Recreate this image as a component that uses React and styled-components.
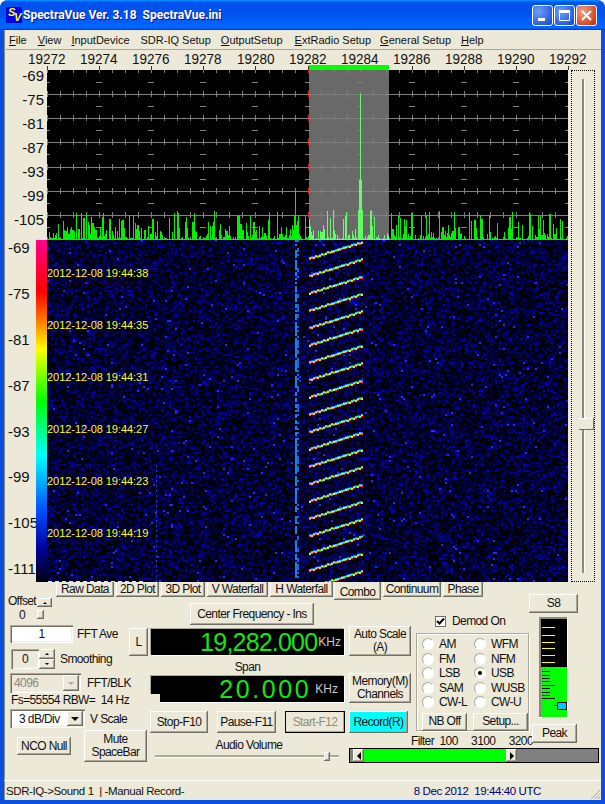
import React from 'react';
import styled, { createGlobalStyle } from 'styled-components';

const GlobalStyle = createGlobalStyle`
html, body { margin: 0; padding: 0; background: #fff; }
body { font-family: "Liberation Sans", Arial, sans-serif; font-size: 12px; letter-spacing: -0.6px; color: #111; }
`;

const raised = `
  background: #ece9d8;
  box-shadow: inset -1px -1px 0 #716f64, inset 1px 1px 0 #fff, inset -2px -2px 0 #aca899;
`;
const sunken = `
  box-shadow: inset 1px 1px 0 #aca899, inset 2px 2px 0 #716f64, inset -1px -1px 0 #fff, inset -2px -2px 0 #f1efe2;
`;

const Window = styled.div`
  width: 605px;
  height: 804px;
  display: flex;
  flex-direction: column;
  overflow: hidden;
  border-radius: 8px 8px 0 0;
  background: #0a50e0;
`;
const TitleBar = styled.div`
  height: 30px;
  flex: none;
  display: flex;
  align-items: center;
  padding: 0 8px 0 6px;
  background: linear-gradient(180deg, #0997ff 0%, #0053ee 8%, #0050ee 40%, #0066ff 88%, #0066ff 93%, #005bff 95%, #003dd7 96%, #003dd7 100%);
`;
const Logo = styled.div`
  width: 16px;
  height: 16px;
  background: #0000e0;
  position: relative;
  flex: none;
  font: italic bold 11px "Liberation Sans", sans-serif;
  letter-spacing: 0;
  color: #ffff00;
`;
const LogoLetter = styled.span`
  position: absolute;
  left: ${p => p.$x}px;
  top: ${p => p.$y}px;
`;
const TitleText = styled.div`
  margin-left: 1px;
  color: #fff;
  font: bold 12px Roboto, "Liberation Sans", sans-serif;
  letter-spacing: 0;
  white-space: pre;
  text-shadow: 1px 1px 0 #0f1089;
  flex: 1;
`;
const CapButton = styled.div`
  width: 21px;
  height: 21px;
  margin-left: 1px;
  border: 1px solid #fff;
  border-radius: 3px;
  box-sizing: border-box;
  background: ${p => p.$close
    ? 'radial-gradient(circle at 30% 30%, #f0a088, #d84a20 70%, #b02c08)'
    : 'radial-gradient(circle at 30% 30%, #6fa0f8, #2a5fe0 70%, #1a44c0)'};
  display: flex;
  align-items: center;
  justify-content: center;
`;
const Client = styled.div`
  flex: 1;
  margin: 0 4px 4px;
  background: #ece9d8;
  display: flex;
  flex-direction: column;
  min-height: 0;
  box-shadow: inset 1px 0 0 #8c8a7c;
`;
const MenuBar = styled.div`
  height: 20px;
  flex: none;
  display: flex;
  align-items: center;
  padding-left: 5px;
  font-size: 11px;
  letter-spacing: 0;
  border-bottom: 1px solid #aca899;
  box-sizing: border-box;
`;
const MenuItem = styled.span`
  margin-right: ${p => p.$gap}px;
  white-space: pre;
`;
const AxisRow = styled.div`
  height: 20px;
  flex: none;
  display: flex;
  padding-left: 17px;
  position: relative;
`;
const AxisLabel = styled.div`
  width: 52.1px;
  flex: none;
  text-align: center;
  font: 15px "Liberation Sans", sans-serif;
  letter-spacing: 0;
  line-height: 17px;
  position: relative;
  &::after {
    content: "";
    position: absolute;
    left: 50%;
    bottom: 0;
    height: 4px;
    width: 1px;
    background: #333;
  }
`;
const AxisNumber = styled.span`
  display: inline-block;
  transform: scaleX(0.9);
`;
const SpanMark = styled.div`
  position: absolute;
  left: 305px;
  bottom: 0;
  width: 80px;
  height: 5px;
  background: #00ff00;
`;
const PlotRow = styled.div`
  display: flex;
  flex: none;
`;
const PlotStack = styled.div`
  width: 564px;
  display: flex;
  flex-direction: column;
`;
const SpectrumRow = styled.div`
  display: flex;
  height: 170px;
`;
const WaterfallRow = styled.div`
  display: flex;
  height: 342px;
`;
const Scale = styled.div`
  width: ${p => p.$w}px;
  flex: none;
  display: flex;
  flex-direction: column;
  align-items: ${p => p.$left ? 'flex-start' : 'flex-end'};
  padding: ${p => p.$left ? '0 0 0 4px' : '0 3px 0 0'};
  box-sizing: border-box;
  font: 15px "Liberation Sans", sans-serif;
  letter-spacing: 0;
  line-height: ${p => p.$lh}px;
  gap: ${p => p.$gap}px;
`;
const ColorBar = styled.div`
  width: 11px;
  flex: none;
  background: linear-gradient(180deg, #ff0090 0%, #ff0040 8%, #ff0000 15%, #ff8000 24%, #ffff00 32%, #00ff00 47%, #00ffff 63%, #0050ff 79%, #0000a0 90%, #000010 100%);
`;
const Plot = styled.div`
  width: 521px;
  flex: none;
  position: relative;
  background: #000;
  overflow: hidden;
  & > svg { display: block; }
`;
const StampLayer = styled.div`
  position: absolute;
  left: 0;
  top: 27px;
  display: flex;
  flex-direction: column;
  gap: 40px;
`;
const Stamp = styled.div`
  color: #ffff00;
  font-size: 11px;
  letter-spacing: -0.05px;
  line-height: 12px;
  white-space: pre;
`;
const FocusSlider = styled.div`
  width: 24px;
  height: 512px;
  margin-left: 3px;
  border: 1px dotted #000;
  box-sizing: border-box;
  position: relative;
  display: flex;
  justify-content: center;
  padding: 8px 0 8px;
`;
const SliderTrack = styled.div`
  width: 3px;
  margin-left: 1px;
  background: linear-gradient(90deg, #8c8a7c, #8c8a7c 66%, #fff 66%);
`;
const SliderThumb = styled.svg`
  position: absolute;
  left: 1px;
  top: 347px;
`;

const BottomPane = styled.div`
  flex: 1;
  display: flex;
  flex-direction: column;
  min-height: 0;
`;
const TabRow = styled.div`
  height: 12px;
  flex: none;
  display: flex;
  align-items: flex-start;
  padding-left: 52px;
  gap: 2px;
  position: relative;
  z-index: 1;
`;
const Tab = styled.div`
  width: ${p => p.$w}px;
  height: ${p => (p.$on ? 18 : 15)}px;
  flex: none;
  margin-left: ${p => p.$on ? -1 : 0}px;
  text-align: center;
  line-height: ${p => (p.$on ? 20 : 15)}px;
  background: #ece9d8;
  box-shadow: inset -1px -1px 0 #716f64, inset 1px 0 0 #fff, inset -2px -2px 0 #aca899;
`;
const Controls = styled.div`
  flex: 1;
  display: flex;
  padding-left: 3px;
`;
const LeftCol = styled.div`
  width: 143px;
  flex: none;
  display: flex;
  flex-direction: column;
`;
const OffsetRow = styled.div`
  height: 28px;
  display: flex;
  box-sizing: border-box;
`;
const OffsetText = styled.div`
  width: 30px;
  text-align: center;
  line-height: 14px;
`;
const OffsetSpin = styled.div`
  display: flex;
  flex-direction: column;
  gap: 3px;
  padding-top: 4px;
`;
const FieldRow = styled.div`
  height: ${p => p.$h}px;
  margin-top: ${p => p.$mt}px;
  padding: 0 2px 0 ${p => p.$pl || 3}px;
  display: flex;
  align-items: ${p => p.$start ? 'flex-start' : 'center'};
  flex: none;
`;
const TextBox = styled.div`
  width: ${p => p.$w}px;
  height: ${p => p.$h}px;
  flex: none;
  box-sizing: border-box;
  background: ${p => p.$white ? '#fff' : 'transparent'};
  color: ${p => p.$off ? '#8a8a80' : '#111'};
  text-align: center;
  line-height: ${p => p.$h}px;
  ${sunken}
`;
const FieldLabel = styled.span`
  margin-left: ${p => p.$ml}px;
  white-space: pre;
  line-height: 18px;
`;
const SpinCol = styled.div`
  width: 16px;
  flex: none;
  display: flex;
  flex-direction: column;
`;
const SpinButton = styled.div`
  width: ${p => p.$w || 16}px;
  height: ${p => p.$h || 10}px;
  display: flex;
  align-items: center;
  justify-content: center;
  ${raised}
`;
const Arrow = styled.div`
  width: 0;
  height: 0;
  border-left: ${p => p.$s}px solid transparent;
  border-right: ${p => p.$s}px solid transparent;
  ${p => p.$up ? `border-bottom: ${p.$s}px solid ${p.$c || '#000'};` : `border-top: ${p.$s}px solid ${p.$c || '#000'};`}
`;
const SelectBox = styled.div`
  width: ${p => p.$w}px;
  height: ${p => p.$h}px;
  flex: none;
  box-sizing: border-box;
  display: flex;
  align-items: center;
  justify-content: space-between;
  padding: 2px 2px 2px 0;
  line-height: 14px;
  background: ${p => p.$off ? 'transparent' : '#fff'};
  color: ${p => p.$off ? '#8a8a80' : '#111'};
  ${sunken}
`;
const SelectText = styled.span`
  padding-left: ${p => p.$pl}px;
`;
const SelectButton = styled.div`
  width: 16px;
  height: 100%;
  display: flex;
  align-items: center;
  justify-content: center;
  ${raised}
`;
const InfoLine = styled.div`
  height: 12px;
  margin-top: 1px;
  padding-left: 4px;
  line-height: 12px;
  white-space: pre;
  flex: none;
`;
const Button = styled.div`
  width: ${p => p.$w}px;
  height: ${p => p.$h}px;
  flex: none;
  box-sizing: border-box;
  display: flex;
  flex-direction: column;
  align-items: center;
  justify-content: center;
  text-align: center;
  line-height: 13px;
  margin: ${p => p.$m || 0};
  color: ${p => p.$off ? '#8f8d80' : '#111'};
  ${raised}
  ${p => p.$cyan && 'background: #00ffff;'}
  ${p => p.$off && 'outline: 1px solid #000; outline-offset: -1px;'}
`;
const PushRight = styled.div`
  margin: 3px 0 0 auto;
`;
const CenterCol = styled.div`
  width: 195px;
  flex: none;
  display: flex;
  flex-direction: column;
  padding-top: 9px;
  box-sizing: border-box;
`;
const Display = styled.div`
  height: 26px;
  margin-left: 1px;
  width: 193px;
  flex: none;
  box-sizing: border-box;
  background: #000;
  box-shadow: 1px 1px 0 #fff, -1px -1px 0 #aca899;
  margin-top: ${p => p.$mt || 0}px;
  display: flex;
  align-items: center;
  justify-content: flex-end;
  padding-right: ${p => p.$pr}px;
  position: relative;
  ${p => p.$notch && `&::after {
    content: "";
    position: absolute;
    left: -1px;
    bottom: -1px;
    width: 10px;
    height: 9px;
    background: #ece9d8;
  }`}
`;
const DisplayValue = styled.span`
  color: #15e615;
  font-size: 25px;
  line-height: 26px;
  letter-spacing: ${p => p.$ls}px;
  white-space: pre;
`;
const DisplayUnit = styled.span`
  color: #c8c8c8;
  font-size: 12px;
  letter-spacing: 0;
  margin-left: ${p => p.$ml}px;
`;
const SpanLabel = styled.div`
  height: 21px;
  line-height: 24px;
  text-align: center;
  flex: none;
`;
const TransportRow = styled.div`
  display: flex;
  gap: 9px;
  margin-top: 9px;
  flex: none;
`;
const VolumeLabel = styled.div`
  text-align: center;
  margin-top: 5px;
  line-height: 14px;
  padding-left: 3px;
`;
const VolumeSlider = styled.div`
  margin: 3px 0 0 5px;
  width: 184px;
  height: 2px;
  background: #aca899;
  border-bottom: 1px solid #fff;
  position: relative;
`;
const VolumeThumb = styled.div`
  position: absolute;
  left: 169px;
  top: -3px;
  width: 6px;
  height: 9px;
  ${raised}
`;
const RightCol = styled.div`
  margin-left: 4px;
  width: 250px;
  flex: none;
  display: flex;
  flex-direction: column;
`;
const RightUpper = styled.div`
  display: flex;
  height: 152px;
  flex: none;
`;
const ButtonCol = styled.div`
  width: 62px;
  flex: none;
  padding-top: 32px;
  display: flex;
  flex-direction: column;
`;
const DemodCol = styled.div`
  width: 113px;
  margin-left: 5px;
  flex: none;
  display: flex;
  flex-direction: column;
  padding-top: 21px;
  box-sizing: border-box;
`;
const DemodRow = styled.div`
  height: 12px;
  display: flex;
  align-items: center;
  padding-left: 19px;
  flex: none;
`;
const CheckBox = styled.div`
  width: 11px;
  height: 11px;
  flex: none;
  background: #fff;
  border: 1px solid #716f64;
  box-sizing: border-box;
  margin-right: 6px;
  display: flex;
  align-items: center;
  justify-content: center;
`;
const RadioGroup = styled.div`
  margin-top: 6px;
  height: 98px;
  flex: none;
  box-sizing: border-box;
  border: 1px solid #aca899;
  box-shadow: 1px 1px 0 #fff, inset 1px 1px 0 #fff;
  padding: 3px 0 0 5px;
  display: flex;
  flex-direction: column;
`;
const RadioGrid = styled.div`
  display: grid;
  grid-template-columns: 52px 52px;
  grid-auto-rows: 14.5px;
`;
const RadioItem = styled.div`
  display: flex;
  align-items: center;
`;
const RadioDot = styled.div`
  width: 12px;
  height: 12px;
  flex: none;
  box-sizing: border-box;
  border-radius: 50%;
  background: #fff;
  border: 1px solid #aca899;
  border-right-color: #fff;
  border-bottom-color: #fff;
  box-shadow: -1px -1px 0 #ece9d8;
  margin-right: 5px;
  display: flex;
  align-items: center;
  justify-content: center;
  &::after {
    content: "";
    width: 4px;
    height: 4px;
    border-radius: 50%;
    background: ${p => p.$on ? '#000' : 'transparent'};
  }
`;
const RadioButtons = styled.div`
  display: flex;
  gap: 6px;
  margin-top: 3px;
`;
const FilterLabels = styled.div`
  margin: 4px 0 0 -5px;
  width: 122px;
  line-height: 12px;
  white-space: pre;
  display: flex;
  justify-content: space-between;
`;
const MeterCol = styled.div`
  width: 49px;
  flex: none;
  display: flex;
  flex-direction: column;
`;
const Meter = styled.svg`
  display: block;
  margin: 4px 0 0 10px;
`;
const FilterBar = styled.div`
  height: 15px;
  width: 250px;
  margin-top: 2px;
  flex: none;
  box-sizing: border-box;
  border: 1px solid #000;
  background: #808080;
  display: flex;
  padding-left: 3px;
`;
const FilterEnd = styled.div`
  width: 11px;
  height: 13px;
  flex: none;
  display: flex;
  align-items: center;
  justify-content: center;
  ${raised}
`;
const SideArrow = styled.div`
  width: 0;
  height: 0;
  border-top: 4px solid transparent;
  border-bottom: 4px solid transparent;
  ${p => p.$left ? 'border-right: 4px solid #000;' : 'border-left: 4px solid #000;'}
`;
const FilterFill = styled.div`
  width: 142px;
  height: 13px;
  flex: none;
  background: #00ff00;
`;
const StatusBar = styled.div`
  height: 19px;
  flex: none;
  display: flex;
  align-items: center;
  padding: 0 0 0 2px;
  border-top: 1px solid #fff;
  white-space: pre;
  font-size: 11.5px;
  letter-spacing: -0.4px;
`;
const StatusTime = styled.span`
  color: #000080;
  margin: 0 47px 0 auto;
`;
const SizeGrip = styled.svg`
  align-self: flex-end;
  flex: none;
`;

// small seeded generator so the noise stays the same on every load
function makeRandom(seed) {
  let s = seed;
  return () => {
    s = (s * 1664525 + 1013904223) >>> 0;
    return s / 4294967296;
  };
}

function buildSpectrum() {
  const rnd = makeRandom(77);
  let inBand = '';
  let outBand = '';
  let last = 0;
  for (let x = 0; x < 521; x++) {
    const r = rnd();
    let h;
    if (r < 0.18) h = last;
    else if (r < 0.42) h = 1;
    else h = Math.pow(rnd(), 2.4) * 28 + 2;
    last = r < 0.18 ? last * 0.6 : h;
    if (x === 248) h = 50;
    if (x === 251) h = 25;
    if (x === 313) h = 146;
    if (x === 312 || x === 314) h = Math.max(h, 60);
    if (x === 311 || x === 315) h = Math.max(h, 30);
    const seg = `M${x} 170V${(170 - h).toFixed(0)}`;
    if (x >= 262 && x < 342) inBand += seg;
    else outBand += seg;
  }
  return { inBand, outBand };
}

function buildNoise() {
  const rnd = makeRandom(1234);
  const paths = ['', '', '', ''];
  for (let y = 0; y < 342; y += 2) {
    for (let x = 0; x < 521; x += 2) {
      const r = rnd();
      let i = -1;
      if (r > 0.99) i = 3;
      else if (r > 0.93) i = 2;
      else if (r > 0.72) i = 1;
      else if (r > 0.4) i = 0;
      if (i >= 0) paths[i] += `M${x} ${y}h2v2h-2z`;
    }
  }
  return paths;
}

function buildStreaks() {
  const rects = [];
  const hues = ['#ff3020', '#ffe000', '#40ff40', '#10d0ff', '#1060ff'];
  for (let n = 0; n < 20; n++) {
    const y0 = 18 + n * 17.33;
    for (let i = 0; i < 54; i += 2) {
      const x = 262 + i;
      const y = Math.round(y0 - i * 0.31);
      const phase = (i / 2 + n) % 3;
      rects.push(<rect key={`${n}-${i}a`} x={x} y={y - 1} width="2" height="1" fill={phase === 0 ? hues[3] : hues[4]} />);
      rects.push(<rect key={`${n}-${i}b`} x={x} y={y} width="2" height="1" fill={phase === 1 ? hues[2] : hues[1]} />);
      rects.push(<rect key={`${n}-${i}c`} x={x} y={y + 1} width="2" height="1" fill={phase === 2 ? hues[1] : hues[0]} />);
    }
  }
  return rects;
}

function dashes(x, total, seed, on) {
  const rnd = makeRandom(seed);
  let d = '';
  for (let y = 0; y < total; y += 2) {
    if (rnd() < on) d += `M${x} ${y}h1.5v2h-1.5z`;
  }
  return d;
}

const spectrum = buildSpectrum();
const noise = buildNoise();
const streaks = buildStreaks();
const noiseColors = ['#000038', '#000070', '#0000c0', '#2828f8'];

function Spectrum() {
  const ys = [24, 48, 72, 97, 121, 145, 170];
  const xs = [];
  for (let i = 0; i <= 40; i++) xs.push(Math.round(i * 13.03));
  return (
    <svg width="521" height="170" shapeRendering="crispEdges">
      <rect x="262" width="80" height="170" fill="#696969" />
      {ys.map(y => <path key={y} d={`M0 ${y}H521`} stroke="#808080" />)}
      {[0, ...ys].map(y => xs.map(x => (
        <path key={`${x}-${y}`} d={`M${x} ${y - 3}v6`} stroke={x > 255 && x < 265 ? '#e02020' : '#808080'} />
      )))}
      {[12, 36, 60, 84, 109, 133, 157].map(y => [0, 1, 2, 3, 4, 5, 6, 7, 8, 9, 10].map(k => (
        <path key={`${k}-${y}`} d={`M${Math.round(k * 52.1) - 3} ${y}h6`} stroke="#808080" />
      )))}
      <path d={spectrum.outBand} stroke="#00f000" />
      <path d={spectrum.inBand} stroke="#62ff62" />
    </svg>
  );
}

function Waterfall() {
  return (
    <svg width="521" height="342" shapeRendering="crispEdges">
      {noise.map((d, i) => <path key={i} d={d} fill={noiseColors[i]} />)}
      <path d={dashes(248, 342, 5, 0.7)} fill="#1488d8" />
      <path d={dashes(250, 342, 6, 0.4)} fill="#1068e0" />
      <path d="M109 225V342" stroke="#0048e0" strokeDasharray="2 3" />
      {streaks}
      <path d="M1 341.5h98" stroke="#ffff00" strokeDasharray="4 3" />
    </svg>
  );
}

function MeterGauge() {
  const yellow = [10, 18, 25, 31, 38, 45];
  const black = [54, 58, 61, 64, 68, 71, 75, 78, 81];
  return (
    <Meter width="29" height="101" shapeRendering="crispEdges">
      <rect width="29" height="101" fill="#000" />
      <rect y="50" width="29" height="51" fill="#00ff00" />
      <path d="M1 0V101M0 1H29" stroke="#8c8a7c" strokeWidth="2" />
      <path d="M28.5 0V101M0 100.5H29" stroke="#fff" />
      {yellow.map(y => <path key={y} d={`M3 ${y}.5H16`} stroke="#ffff00" />)}
      {black.map(y => <path key={y} d={`M3 ${y}.5H${y === 68 || y === 81 ? 16 : 11}`} stroke="#000" />)}
      <path d="M15 88.5H18" stroke="#000" />
      <rect x="18.5" y="85.5" width="9" height="7" fill="#00c8ff" stroke="#000" />
    </Meter>
  );
}

const axisValues = [19272, 19274, 19276, 19278, 19280, 19282, 19284, 19286, 19288, 19290, 19292];
const stamps = ['38', '35', '31', '27', '23', '19'];
const tabs = [
  ['Raw Data', 58], ['2D Plot', 43], ['3D Plot', 44], ['V Waterfall', 61],
  ['H Waterfall', 63], ['Combo', 47, true], ['Continuum', 58], ['Phase', 40],
];
const radios = ['AM', 'WFM', 'FM', 'NFM', 'LSB', 'USB', 'SAM', 'WUSB', 'CW-L', 'CW-U'];
const topScale = ['-69', '-75', '-81', '-87', '-93', '-99', '-105'];
const fallScale = ['-69', '-75', '-81', '-87', '-93', '-99', '-105', '-111'];

export default function App() {
  return (
    <Window>
      <GlobalStyle />
      <TitleBar>
        <Logo>
          <LogoLetter $x={2} $y={-1}>S</LogoLetter>
          <LogoLetter $x={8} $y={4}>V</LogoLetter>
        </Logo>
        <TitleText>SpectraVue Ver. 3.18  SpectraVue.ini</TitleText>
        <CapButton>
          <svg width="13" height="13"><rect x="2" y="9" width="7" height="3" fill="#fff" /></svg>
        </CapButton>
        <CapButton>
          <svg width="13" height="13" fill="none" stroke="#fff"><path d="M1.5 3.5h10v8h-10z" /><path d="M1 2h11" strokeWidth="2" /></svg>
        </CapButton>
        <CapButton $close>
          <svg width="13" height="13" stroke="#fff" strokeWidth="2"><path d="M2 2l9 9M11 2l-9 9" /></svg>
        </CapButton>
      </TitleBar>
      <Client>
        <MenuBar>
          <MenuItem $gap={11}><u>F</u>ile</MenuItem>
          <MenuItem $gap={10}><u>V</u>iew</MenuItem>
          <MenuItem $gap={11}><u>I</u>nputDevice</MenuItem>
          <MenuItem $gap={10}>SDR-IQ Setup</MenuItem>
          <MenuItem $gap={12}><u>O</u>utputSetup</MenuItem>
          <MenuItem $gap={9}><u>E</u>xtRadio Setup</MenuItem>
          <MenuItem $gap={10}><u>G</u>eneral Setup</MenuItem>
          <MenuItem $gap={0}><u>H</u>elp</MenuItem>
        </MenuBar>
        <AxisRow>
          {axisValues.map(v => <AxisLabel key={v}><AxisNumber>{v}</AxisNumber></AxisLabel>)}
          <SpanMark />
        </AxisRow>
        <PlotRow>
          <PlotStack>
            <SpectrumRow>
              <Scale $w={43} $lh={12} $gap={12}>
                {topScale.map(v => <div key={v}>{v}</div>)}
              </Scale>
              <Plot><Spectrum /></Plot>
            </SpectrumRow>
            <WaterfallRow>
              <Scale $w={32} $lh={16} $gap={29.9} $left>
                {fallScale.map(v => <div key={v}>{v}</div>)}
              </Scale>
              <ColorBar />
              <Plot>
                <Waterfall />
                <StampLayer>
                  {stamps.map(s => <Stamp key={s}>2012-12-08 19:44:{s}</Stamp>)}
                </StampLayer>
              </Plot>
            </WaterfallRow>
          </PlotStack>
          <FocusSlider>
            <SliderTrack />
            <SliderThumb width="21" height="12" shapeRendering="crispEdges">
              <path d="M0 6L6 0H21V12H6z" fill="#ece9d8" />
              <path d="M6 .5H20.5V11.5" fill="none" stroke="#fff" />
              <path d="M20.5 0V12M6 11.5H21" fill="none" stroke="#716f64" />
            </SliderThumb>
          </FocusSlider>
        </PlotRow>
        <BottomPane>
          <TabRow>
            {tabs.map(([t, w, on]) => <Tab key={t} $w={w} $on={on}>{t}</Tab>)}
          </TabRow>
          <Controls>
            <LeftCol>
              <OffsetRow>
                <OffsetText>Offset<br />0</OffsetText>
                <OffsetSpin>
                  <SpinButton $w={15} $h={9}><Arrow $up $s={2} /></SpinButton>
                  <SpinButton $w={7} $h={9} />
                </OffsetSpin>
              </OffsetRow>
              <FieldRow $h={18} $mt={3} $start>
                <TextBox $w={63} $h={18} $white>1</TextBox>
                <FieldLabel $ml={4}>FFT Ave</FieldLabel>
                <PushRight><Button $w={19} $h={28}>L</Button></PushRight>
              </FieldRow>
              <FieldRow $h={20} $mt={6} $pl={4}>
                <TextBox $w={28} $h={20}>0</TextBox>
                <SpinCol>
                  <SpinButton><Arrow $up $s={2} /></SpinButton>
                  <SpinButton><Arrow $s={2} /></SpinButton>
                </SpinCol>
                <FieldLabel $ml={5}>Smoothing</FieldLabel>
              </FieldRow>
              <FieldRow $h={20} $mt={4}>
                <SelectBox $w={71} $h={20} $off>
                  <SelectText $pl={4}>4096</SelectText>
                  <SelectButton><Arrow $s={3} $c="#aca899" /></SelectButton>
                </SelectBox>
                <FieldLabel $ml={6}>FFT/BLK</FieldLabel>
              </FieldRow>
              <InfoLine>Fs=55554 RBW=  14 Hz</InfoLine>
              <FieldRow $h={19} $mt={3}>
                <SelectBox $w={75} $h={19}>
                  <SelectText $pl={9}>3 dB/Div</SelectText>
                  <SelectButton><Arrow $s={4} /></SelectButton>
                </SelectBox>
                <FieldLabel $ml={5}>V Scale</FieldLabel>
              </FieldRow>
              <FieldRow $h={32} $mt={2} $pl={10} $start>
                <Button $w={54} $h={18} $m="7px 0 0 0">NCO Null</Button>
                <Button $w={63} $h={32} $m="0 0 0 13px">Mute<br />SpaceBar</Button>
              </FieldRow>
            </LeftCol>
            <CenterCol>
              <Button $w={124} $h={22} $m="0 0 0 40px">Center Frequency - Ins</Button>
              <Display $mt={4} $pr={3}>
                <DisplayValue $ls={-0.8}>19,282.000</DisplayValue>
                <DisplayUnit $ml={1}>KHz</DisplayUnit>
              </Display>
              <SpanLabel>Span</SpanLabel>
              <Display $pr={6} $notch>
                <DisplayValue $ls={2.6}>20.000</DisplayValue>
                <DisplayUnit $ml={4}>KHz</DisplayUnit>
              </Display>
              <TransportRow>
                <Button $w={58} $h={22}>Stop-F10</Button>
                <Button $w={59} $h={22}>Pause-F11</Button>
                <Button $w={60} $h={22} $off>Start-F12</Button>
              </TransportRow>
              <VolumeLabel>Audio Volume</VolumeLabel>
              <VolumeSlider><VolumeThumb /></VolumeSlider>
            </CenterCol>
            <RightCol>
              <RightUpper>
                <ButtonCol>
                  <Button $w={62} $h={30}>Auto Scale<br />(A)</Button>
                  <Button $w={62} $h={30} $m="17px 0 0 0">Memory(M)<br />Channels</Button>
                  <Button $w={59} $h={22} $m="8px 0 0 0" $cyan>Record(R)</Button>
                </ButtonCol>
                <DemodCol>
                  <DemodRow>
                    <CheckBox>
                      <svg width="9" height="9" fill="none" stroke="#000" strokeWidth="2"><path d="M1 4l2.5 2.5L8 1.5" /></svg>
                    </CheckBox>
                    Demod On
                  </DemodRow>
                  <RadioGroup>
                    <RadioGrid>
                      {radios.map(r => <RadioItem key={r}><RadioDot $on={r === 'USB'} />{r}</RadioItem>)}
                    </RadioGrid>
                    <RadioButtons>
                      <Button $w={45} $h={18}>NB Off</Button>
                      <Button $w={55} $h={18}>Setup...</Button>
                    </RadioButtons>
                  </RadioGroup>
                  <FilterLabels>
                    <span>Filter  100</span>
                    <span>3100</span>
                    <span>3200</span>
                  </FilterLabels>
                </DemodCol>
                <MeterCol>
                  <Button $w={49} $h={19}>S8</Button>
                  <MeterGauge />
                  <Button $w={45} $h={19} $m="6px 0 0 3px">Peak</Button>
                </MeterCol>
              </RightUpper>
              <FilterBar>
                <FilterEnd><SideArrow $left /></FilterEnd>
                <FilterFill />
                <FilterEnd><SideArrow /></FilterEnd>
              </FilterBar>
            </RightCol>
          </Controls>
          <StatusBar>
            <span>SDR-IQ-&gt;Sound 1  | -Manual Record-</span>
            <StatusTime>8 Dec 2012  19:44:40 UTC</StatusTime>
            <SizeGrip width="13" height="13" stroke="#aca899">
              <path d="M12 3L3 12M12 6.5L6.5 12M12 10L10 12" />
            </SizeGrip>
          </StatusBar>
        </BottomPane>
      </Client>
    </Window>
  );
}
